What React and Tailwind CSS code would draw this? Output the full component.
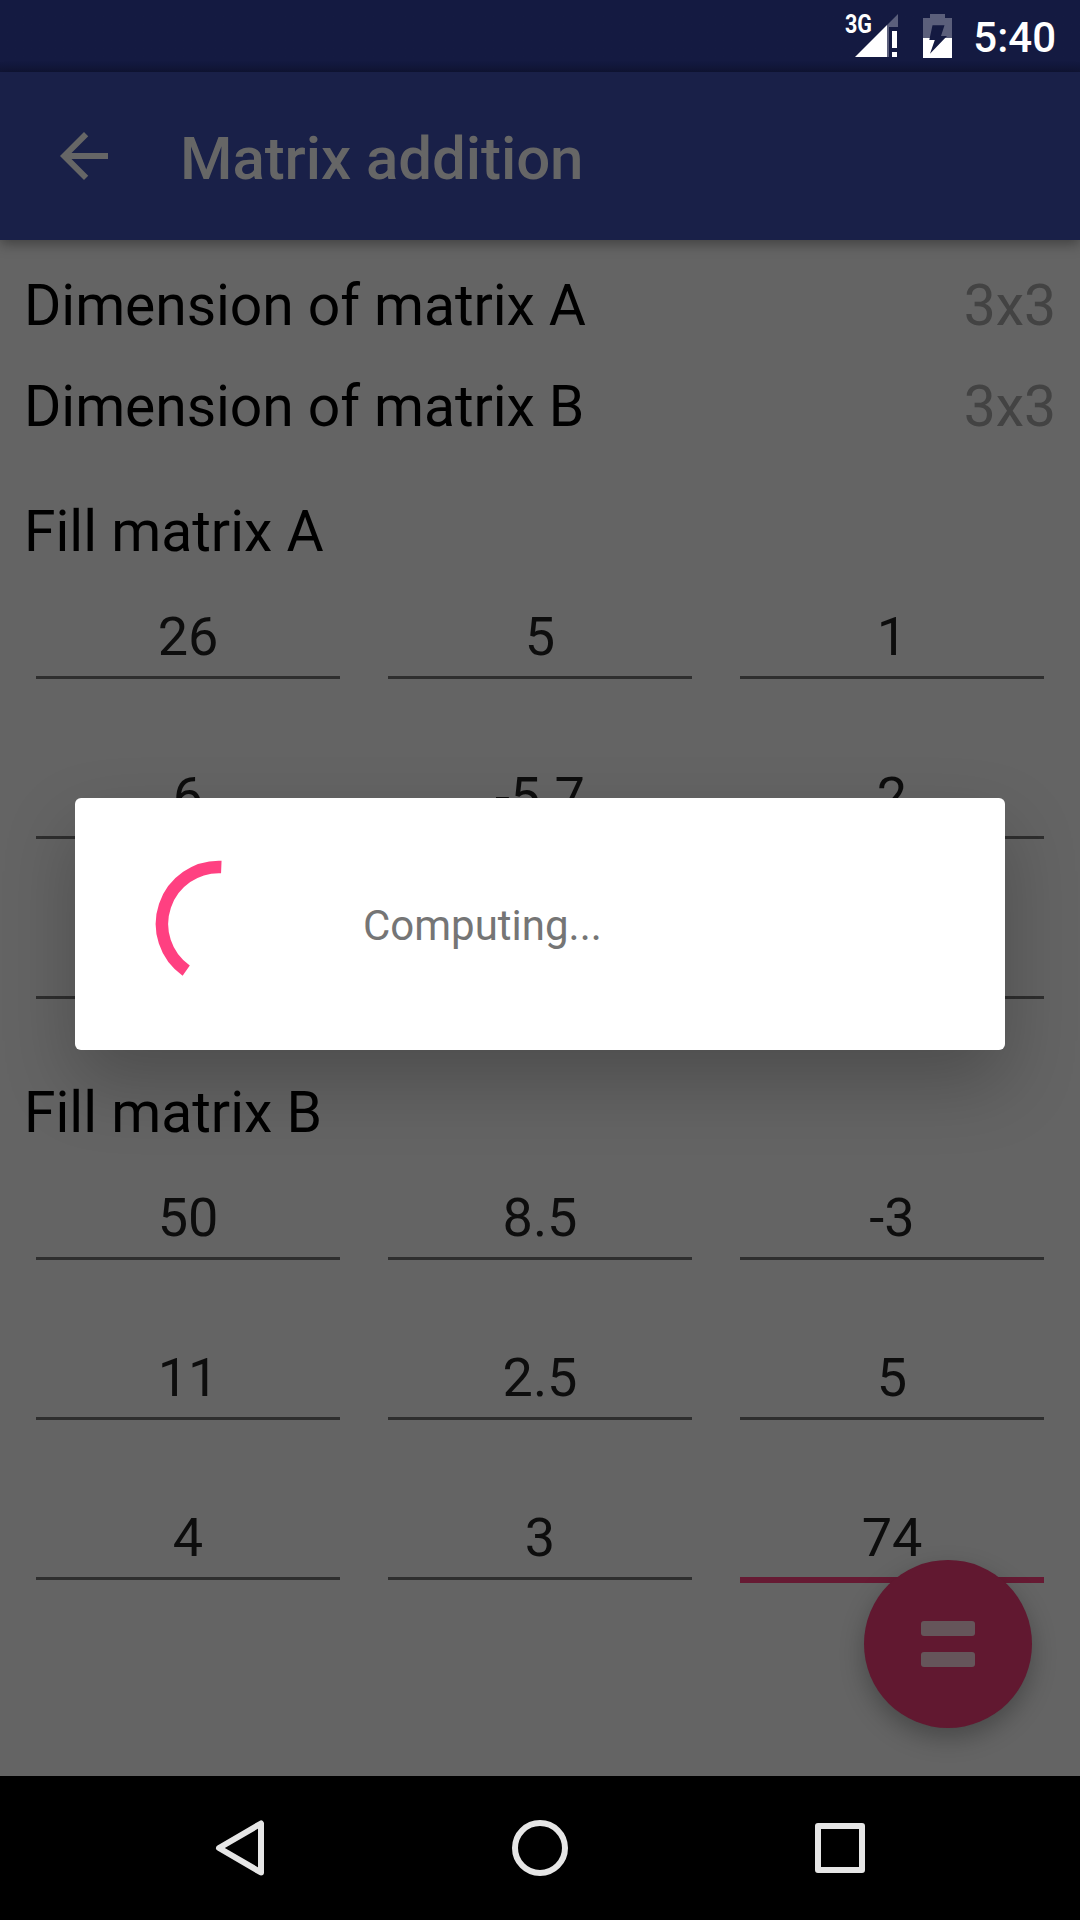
const matrixA = [["26", "5", "1"], ["6", "-5.7", "2"], ["", "", ""]];
const matrixB = [["50", "8.5", "-3"], ["11", "2.5", "5"], ["4", "3", "74"]];

function StatusBar() {
  return (
    <div className="flex h-[72px] items-start justify-end bg-gradient-to-b from-[#141a41] from-85% to-[#101535]">
      <svg className="-mr-[1px] h-[72px] w-[134px]" viewBox="840 0 134 72">
        <text x="845" y="33" fontFamily="Roboto" fontWeight="700" fontSize="25" textLength="27" lengthAdjust="spacingAndGlyphs" fill="#fff">3G</text>
        <path d="M887 25 898 14V27H889V57H887z" fill="#5b5f7b" />
        <path d="M855 57 887 25V57z" fill="#fff" />
        <path d="M892 31h5v17h-5zM892 52h5v5h-5z" fill="#fff" />
        <path d="M930 14h15v4h7v20h-29V18h7z" fill="#5b5f7b" />
        <path d="M923 38h29v20h-29z" fill="#fff" />
        <path d="M932.500 25.300h12l-3.500 10.700h6l-17 17.700 4.800-13.700h-5.500z" fill="#141a41" />
      </svg>
      <span className="mr-[24px] mt-[13px] text-[42px] font-medium leading-[50px] text-white">5:40</span>
    </div>
  );
}

function AppBar() {
  return (
    <div className="relative flex h-[168px] items-center bg-[#192048] pl-[48px] text-[#666] shadow-[0_4px_12px_rgba(0,0,0,0.35)]">
      <svg className="size-[72px]" viewBox="0 0 24 24" fill="currentColor">
        <path d="M20 11H7.830l5.590-5.590L12 4l-8 8 8 8 1.410-1.410L7.830 13H20v-2z" />
      </svg>
      <h1 className="ml-[60px] mt-[6px] text-[60px] font-medium leading-[70px] tracking-[-0.06px]">Matrix addition</h1>
    </div>
  );
}

function Dimension({ name }) {
  return (
    <div className="flex h-[101px] items-center justify-between text-[57px] leading-[67px]">
      <span className="tracking-[-0.06px] text-black">Dimension of matrix {name}</span>
      <span className="text-[#434343]">3x3</span>
    </div>
  );
}

function Matrix({ name, rows, focused }) {
  return (
    <section>
      <h2 className="h-[67px] text-[57px] leading-[67px] text-black">Fill matrix {name}</h2>
      <div className="mt-[17px] grid grid-cols-3 gap-x-[48px] px-[12px]">
        {rows.flat().map((value, i) => (
          <div key={i} className="h-[160px]">
            <div className="h-[94px] pt-[23px] text-center text-[54px] leading-[64px] text-[#0d0d0d]">{value}</div>
            <div className={i === focused ? "h-[6px] bg-[#661a33]" : "h-[3px] bg-[#2e2e2e]"} />
          </div>
        ))}
      </div>
    </section>
  );
}

function NavBar() {
  return (
    <div className="flex h-[144px] items-center justify-between bg-black px-[204px]">
      <svg className="size-[72px]" viewBox="0 0 72 72" fill="none" stroke="#e6e6e6" strokeWidth="6" strokeLinejoin="round">
        <path d="M57 11.500V60.500L15 36z" />
      </svg>
      <svg className="size-[72px]" viewBox="0 0 72 72" fill="none" stroke="#e6e6e6" strokeWidth="6">
        <circle cx="36" cy="36" r="25" />
      </svg>
      <svg className="size-[72px]" viewBox="0 0 72 72" fill="none" stroke="#e6e6e6" strokeWidth="6" strokeLinejoin="round">
        <rect x="14" y="14" width="44" height="44" />
      </svg>
    </div>
  );
}

export default function App() {
  return (
    <div className="relative flex h-[1920px] w-[1080px] flex-col overflow-hidden bg-[#646464] font-['Roboto',sans-serif]">
      <StatusBar />
      <AppBar />
      <main className="flex-1 px-[24px] pt-[15px]">
        <Dimension name="A" />
        <Dimension name="B" />
        <div className="mt-[41px]">
          <Matrix name="A" rows={matrixA} />
        </div>
        <div className="mt-[17px]">
          <Matrix name="B" rows={matrixB} focused={8} />
        </div>
      </main>
      <button className="absolute right-[48px] top-[1560px] flex size-[168px] flex-col items-center justify-center gap-[16px] rounded-full bg-[#611830] shadow-[0_10px_24px_rgba(0,0,0,0.28)]">
        <span className="h-[15px] w-[54px] rounded-[3px] bg-[#65555a]" />
        <span className="h-[15px] w-[54px] rounded-[3px] bg-[#65555a]" />
      </button>
      <div className="absolute left-[75px] top-[798px] flex h-[252px] w-[930px] items-center rounded-[6px] bg-white pl-[72px] shadow-[0_32px_72px_rgba(0,0,0,0.23)]">
        <svg className="size-[144px]" viewBox="147 852 144 144" fill="none" stroke="#ff4081" strokeWidth="12.500">
          <path d="M221.300 867A57 57 0 0 0 186.200 970.600" />
        </svg>
        <span className="ml-[72px] mt-[4px] text-[42px] leading-[50px] text-[#757575]">Computing...</span>
      </div>
      <NavBar />
    </div>
  );
}
